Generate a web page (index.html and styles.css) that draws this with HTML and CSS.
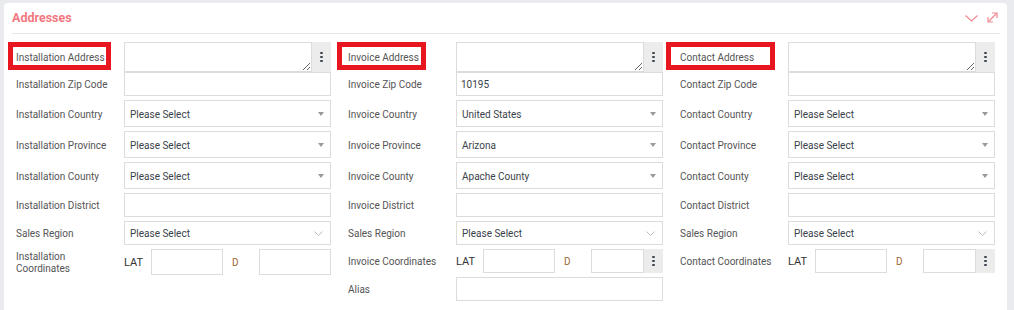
FILE: index.html
```html
<!DOCTYPE html>
<html lang="en">
<head>
  <meta charset="UTF-8" />
  <title>Addresses</title>
  <link rel="stylesheet" href="styles.css">
</head>
<body>
  <div class="card">
    <div class="card-head">
      <h2>Addresses</h2>
      <div class="tools">
        <svg class="chev" width="13" height="7" viewBox="0 0 13 7"><polyline points="0.5,0.5 6.5,6 12.5,0.5" fill="none" stroke="#f28a90" stroke-width="1.2"/></svg>
        <svg class="expand" width="11" height="11" viewBox="0 0 11 11" fill="none" stroke="#f28a90" stroke-width="1.2"><line x1="1.5" y1="9.5" x2="9.5" y2="1.5"/><polyline points="5,1 10,1 10,6"/><polyline points="1,5 1,10 6,10"/></svg>
      </div>
    </div>

    <div class="card-body">
      <!-- installation -->
      <div class="col">
        <div class="field h-area">
          <div class="label"><span class="mark mark-a"></span>Installation Address</div>
          <div class="group">
            <textarea></textarea>
            <div class="kebab"><i></i><i></i><i></i></div>
          </div>
        </div>
        <div class="field">
          <div class="label">Installation Zip Code</div>
          <input class="input" type="text">
        </div>
        <div class="field h-sel">
          <div class="label">Installation Country</div>
          <div class="select"><span>Please Select</span><b class="caret"></b></div>
        </div>
        <div class="field h-sel">
          <div class="label">Installation Province</div>
          <div class="select"><span>Please Select</span><b class="caret"></b></div>
        </div>
        <div class="field h-sel">
          <div class="label">Installation County</div>
          <div class="select"><span>Please Select</span><b class="caret"></b></div>
        </div>
        <div class="field">
          <div class="label">Installation District</div>
          <input class="input" type="text">
        </div>
        <div class="field">
          <div class="label">Sales Region</div>
          <div class="select"><span>Please Select</span><svg class="vee" width="9" height="5" viewBox="0 0 9 5"><polyline points="0.5,0.5 4.5,4.5 8.5,0.5" fill="none" stroke="#bbb" stroke-width="1"/></svg></div>
        </div>
        <div class="field">
          <div class="label narrow">Installation Coordinates</div>
          <div class="coords">
            <span class="lat">LAT</span>
            <input class="input" type="text">
            <span class="d">D</span>
            <input class="input" type="text">
          </div>
        </div>
      </div>

      <!-- invoice -->
      <div class="col">
        <div class="field h-area">
          <div class="label"><span class="mark mark-b"></span>Invoice Address</div>
          <div class="group">
            <textarea></textarea>
            <div class="kebab"><i></i><i></i><i></i></div>
          </div>
        </div>
        <div class="field">
          <div class="label">Invoice Zip Code</div>
          <input class="input" type="text" value="10195">
        </div>
        <div class="field h-sel">
          <div class="label">Invoice Country</div>
          <div class="select"><span>United States</span><b class="caret"></b></div>
        </div>
        <div class="field h-sel">
          <div class="label">Invoice Province</div>
          <div class="select"><span>Arizona</span><b class="caret"></b></div>
        </div>
        <div class="field h-sel">
          <div class="label">Invoice County</div>
          <div class="select"><span>Apache County</span><b class="caret"></b></div>
        </div>
        <div class="field">
          <div class="label">Invoice District</div>
          <input class="input" type="text">
        </div>
        <div class="field">
          <div class="label">Sales Region</div>
          <div class="select"><span>Please Select</span><svg class="vee" width="9" height="5" viewBox="0 0 9 5"><polyline points="0.5,0.5 4.5,4.5 8.5,0.5" fill="none" stroke="#bbb" stroke-width="1"/></svg></div>
        </div>
        <div class="field">
          <div class="label">Invoice Coordinates</div>
          <div class="coords">
            <span class="lat">LAT</span>
            <input class="input" type="text">
            <span class="d">D</span>
            <div class="group">
              <input class="input" type="text">
              <div class="kebab"><i></i><i></i><i></i></div>
            </div>
          </div>
        </div>
        <div class="field">
          <div class="label">Alias</div>
          <input class="input" type="text">
        </div>
      </div>

      <!-- contact -->
      <div class="col">
        <div class="field h-area">
          <div class="label"><span class="mark mark-c"></span>Contact Address</div>
          <div class="group">
            <textarea></textarea>
            <div class="kebab"><i></i><i></i><i></i></div>
          </div>
        </div>
        <div class="field">
          <div class="label">Contact Zip Code</div>
          <input class="input" type="text">
        </div>
        <div class="field h-sel">
          <div class="label">Contact Country</div>
          <div class="select"><span>Please Select</span><b class="caret"></b></div>
        </div>
        <div class="field h-sel">
          <div class="label">Contact Province</div>
          <div class="select"><span>Please Select</span><b class="caret"></b></div>
        </div>
        <div class="field h-sel">
          <div class="label">Contact County</div>
          <div class="select"><span>Please Select</span><b class="caret"></b></div>
        </div>
        <div class="field">
          <div class="label">Contact District</div>
          <input class="input" type="text">
        </div>
        <div class="field">
          <div class="label">Sales Region</div>
          <div class="select"><span>Please Select</span><svg class="vee" width="9" height="5" viewBox="0 0 9 5"><polyline points="0.5,0.5 4.5,4.5 8.5,0.5" fill="none" stroke="#bbb" stroke-width="1"/></svg></div>
        </div>
        <div class="field">
          <div class="label">Contact Coordinates</div>
          <div class="coords">
            <span class="lat">LAT</span>
            <input class="input" type="text">
            <span class="d">D</span>
            <div class="group">
              <input class="input" type="text">
              <div class="kebab"><i></i><i></i><i></i></div>
            </div>
          </div>
        </div>
      </div>
    </div>
  </div>
</body>
</html>
```

FILE: styles.css
```css
:root {
  --page: #e9ebee;
  --line: #dcdcdc;
  --label: #555;
  --text: #3a3f4a;
  --accent: #f2777f;
  --mark: #e8161f;
}

body {
  margin: 0;
  background: var(--page);
  font-family: Roboto, "Noto Sans", sans-serif;
  overflow: hidden;
}

.card {
  margin: 3px 7px 0 4px;
  padding: 0 7px 20px 8px;
  background: #fff;
  border-radius: 4px 4px 0 0;
  height: 320px;
  box-sizing: border-box;
}

.card-head {
  height: 31px;
  padding: 0 2px 0 0;
  border-bottom: 1px solid #e6e6e6;
  display: flex;
  align-items: center;
  justify-content: space-between;
  box-sizing: border-box;
}

.card-head h2 {
  margin: 0 0 2px;
  font-size: 12.5px;
  font-weight: 700;
  color: var(--accent);
}

.tools {
  display: flex;
  align-items: center;
  gap: 9px;
  margin-bottom: 1px;
}

.tools .chev {
  margin-top: 2px;
}

.card-body {
  padding: 8px 0 0 4px;
  display: grid;
  grid-template-columns: repeat(3, 315px);
  column-gap: 17px;
  align-items: start;
}

.col {
  display: flex;
  flex-direction: column;
  gap: 4px;
}

.field {
  display: grid;
  grid-template-columns: 108px 207px;
  height: 24px;
}

.field.h-area { height: 26px; }
.field.h-sel { height: 27px; }

.label {
  position: relative;
  display: flex;
  align-items: center;
  font-size: 10px;
  line-height: 12px;
  color: var(--label);
  padding: 2px 8px 0 0;
}

.label.narrow {
  padding-right: 40px;
}

/* red annotation boxes */
.mark {
  position: absolute;
  top: 0;
  height: 28px;
  border: 5px solid var(--mark);
  box-sizing: border-box;
}
.mark-a { left: -8px; width: 103px; }
.mark-b { left: -11px; width: 89px; }
.mark-c { left: -14px; width: 109px; }

.input, textarea, .select {
  box-sizing: border-box;
  border: 1px solid var(--line);
  background: #fff;
  font-family: inherit;
  font-size: 10px;
  color: var(--text);
  outline: none;
  margin: 0;
  min-width: 0;
}

.input {
  height: 100%;
  width: 100%;
  padding: 1px 4px 0;
}

.group {
  display: flex;
  height: 100%;
  min-width: 0;
}

.group textarea {
  flex: 1;
  height: 100%;
  padding: 3px 4px;
}

.group .input {
  flex: 1;
}

.kebab {
  width: 19px;
  flex: none;
  background: #ececec;
  display: flex;
  flex-direction: column;
  align-items: center;
  justify-content: center;
  gap: 2px;
}

.kebab i {
  width: 3px;
  height: 2px;
  background: #3d4650;
  border-radius: 1px;
}

.select {
  display: flex;
  align-items: center;
  justify-content: space-between;
  padding: 1px 6px 0 5px;
}

.caret {
  width: 0;
  height: 0;
  border-left: 3.5px solid transparent;
  border-right: 3.5px solid transparent;
  border-top: 4px solid #999;
}

.vee {
  margin-right: 1px;
}

.coords {
  display: grid;
  grid-template-columns: 27px 72px 36px 1fr;
  align-items: center;
  height: 100%;
}

.coords .lat {
  font-size: 11px;
  color: #333;
  padding-top: 1px;
}

.coords .d {
  font-size: 10px;
  color: #9a6633;
  padding: 1px 0 0 9px;
}
```
